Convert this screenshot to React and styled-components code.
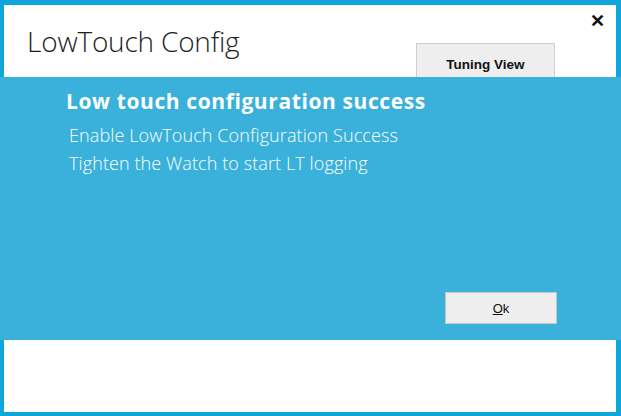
import React from "react";
import styled, { createGlobalStyle } from "styled-components";

const GlobalStyle = createGlobalStyle`
  html, body { margin: 0; padding: 0; background: #ffffff; }
  body { font-family: "Open Sans", "Noto Sans", sans-serif; }
`;

const Window = styled.div`
  width: 621px;
  height: 416px;
  box-sizing: border-box;
  background: #0ea6dc;
  display: flex;
  flex-direction: column;
  overflow: hidden;
`;

const Header = styled.div`
  position: relative;
  height: 72px;
  margin: 5px 5px 0 4px;
  background: #ffffff;
  display: flex;
  align-items: flex-start;
  justify-content: space-between;
  padding: 0 61px 0 23px;
  overflow: hidden;
`;

const Title = styled.h1`
  margin: 18px 0 0 0;
  font-family: "Open Sans", sans-serif;
  font-weight: 300;
  font-size: 28px;
  line-height: 36px;
  color: #1e1e1e;
  letter-spacing: -0.2px;
`;

const Close = styled.button`
  position: absolute;
  top: 7px;
  right: 11px;
  border: none;
  background: none;
  padding: 0;
  font-family: "Liberation Sans", sans-serif;
  font-weight: 700;
  font-size: 18px;
  line-height: 18px;
  color: #111;
  cursor: pointer;
`;

const Button = styled.button`
  box-sizing: border-box;
  width: ${({ $w }) => $w}px;
  height: ${({ $h }) => $h}px;
  margin-top: ${({ $top }) => $top || 0}px;
  background: #eeeeee;
  border: 1px solid ${({ $border }) => $border || "#cfcfcf"};
  font-family: "Liberation Sans", sans-serif;
  font-size: ${({ $size }) => $size || 12}px;
  font-weight: ${({ $bold }) => ($bold ? 700 : 400)};
  color: #111;
  padding: ${({ $pad }) => $pad || "0"};
  cursor: pointer;
`;

const Panel = styled.div`
  height: 263px;
  background: #39b1db;
  display: flex;
  flex-direction: column;
  padding: 0 64px 16px 66px;
  box-sizing: border-box;
`;

const Heading = styled.h2`
  margin: 10px 0 0 0;
  font-family: "Open Sans", sans-serif;
  font-weight: 700;
  font-size: 21px;
  line-height: 28px;
  color: #ffffff;
  letter-spacing: 0.6px;
`;

const Line = styled.p`
  margin: 0 0 0 3px;
  font-family: "Open Sans", sans-serif;
  font-weight: 300;
  font-size: 18px;
  line-height: 28px;
  color: #ffffff;
  letter-spacing: 0.1px;
  &:first-of-type { margin-top: 6px; }
`;

const Actions = styled.div`
  margin-top: auto;
  display: flex;
  justify-content: flex-end;
`;

const Footer = styled.div`
  flex: 1;
  margin: 0 5px 4px 4px;
  background: #ffffff;
`;

export default function App() {
  return (
    <>
      <GlobalStyle />
      <Window>
        <Header>
          <Title>LowTouch Config</Title>
          <Button $w={139} $h={40} $top={38} $size={13.5} $bold $pad="2px 0 0 0">
            Tuning View
          </Button>
          <Close aria-label="Close">✕</Close>
        </Header>
        <Panel>
          <Heading>Low touch configuration success</Heading>
          <Line>Enable LowTouch Configuration Success</Line>
          <Line>Tighten the Watch to start LT logging</Line>
          <Actions>
            <Button $w={112} $h={32} $size={13} $border="#c4c4c4">
              <u>O</u>k
            </Button>
          </Actions>
        </Panel>
        <Footer />
      </Window>
    </>
  );
}
